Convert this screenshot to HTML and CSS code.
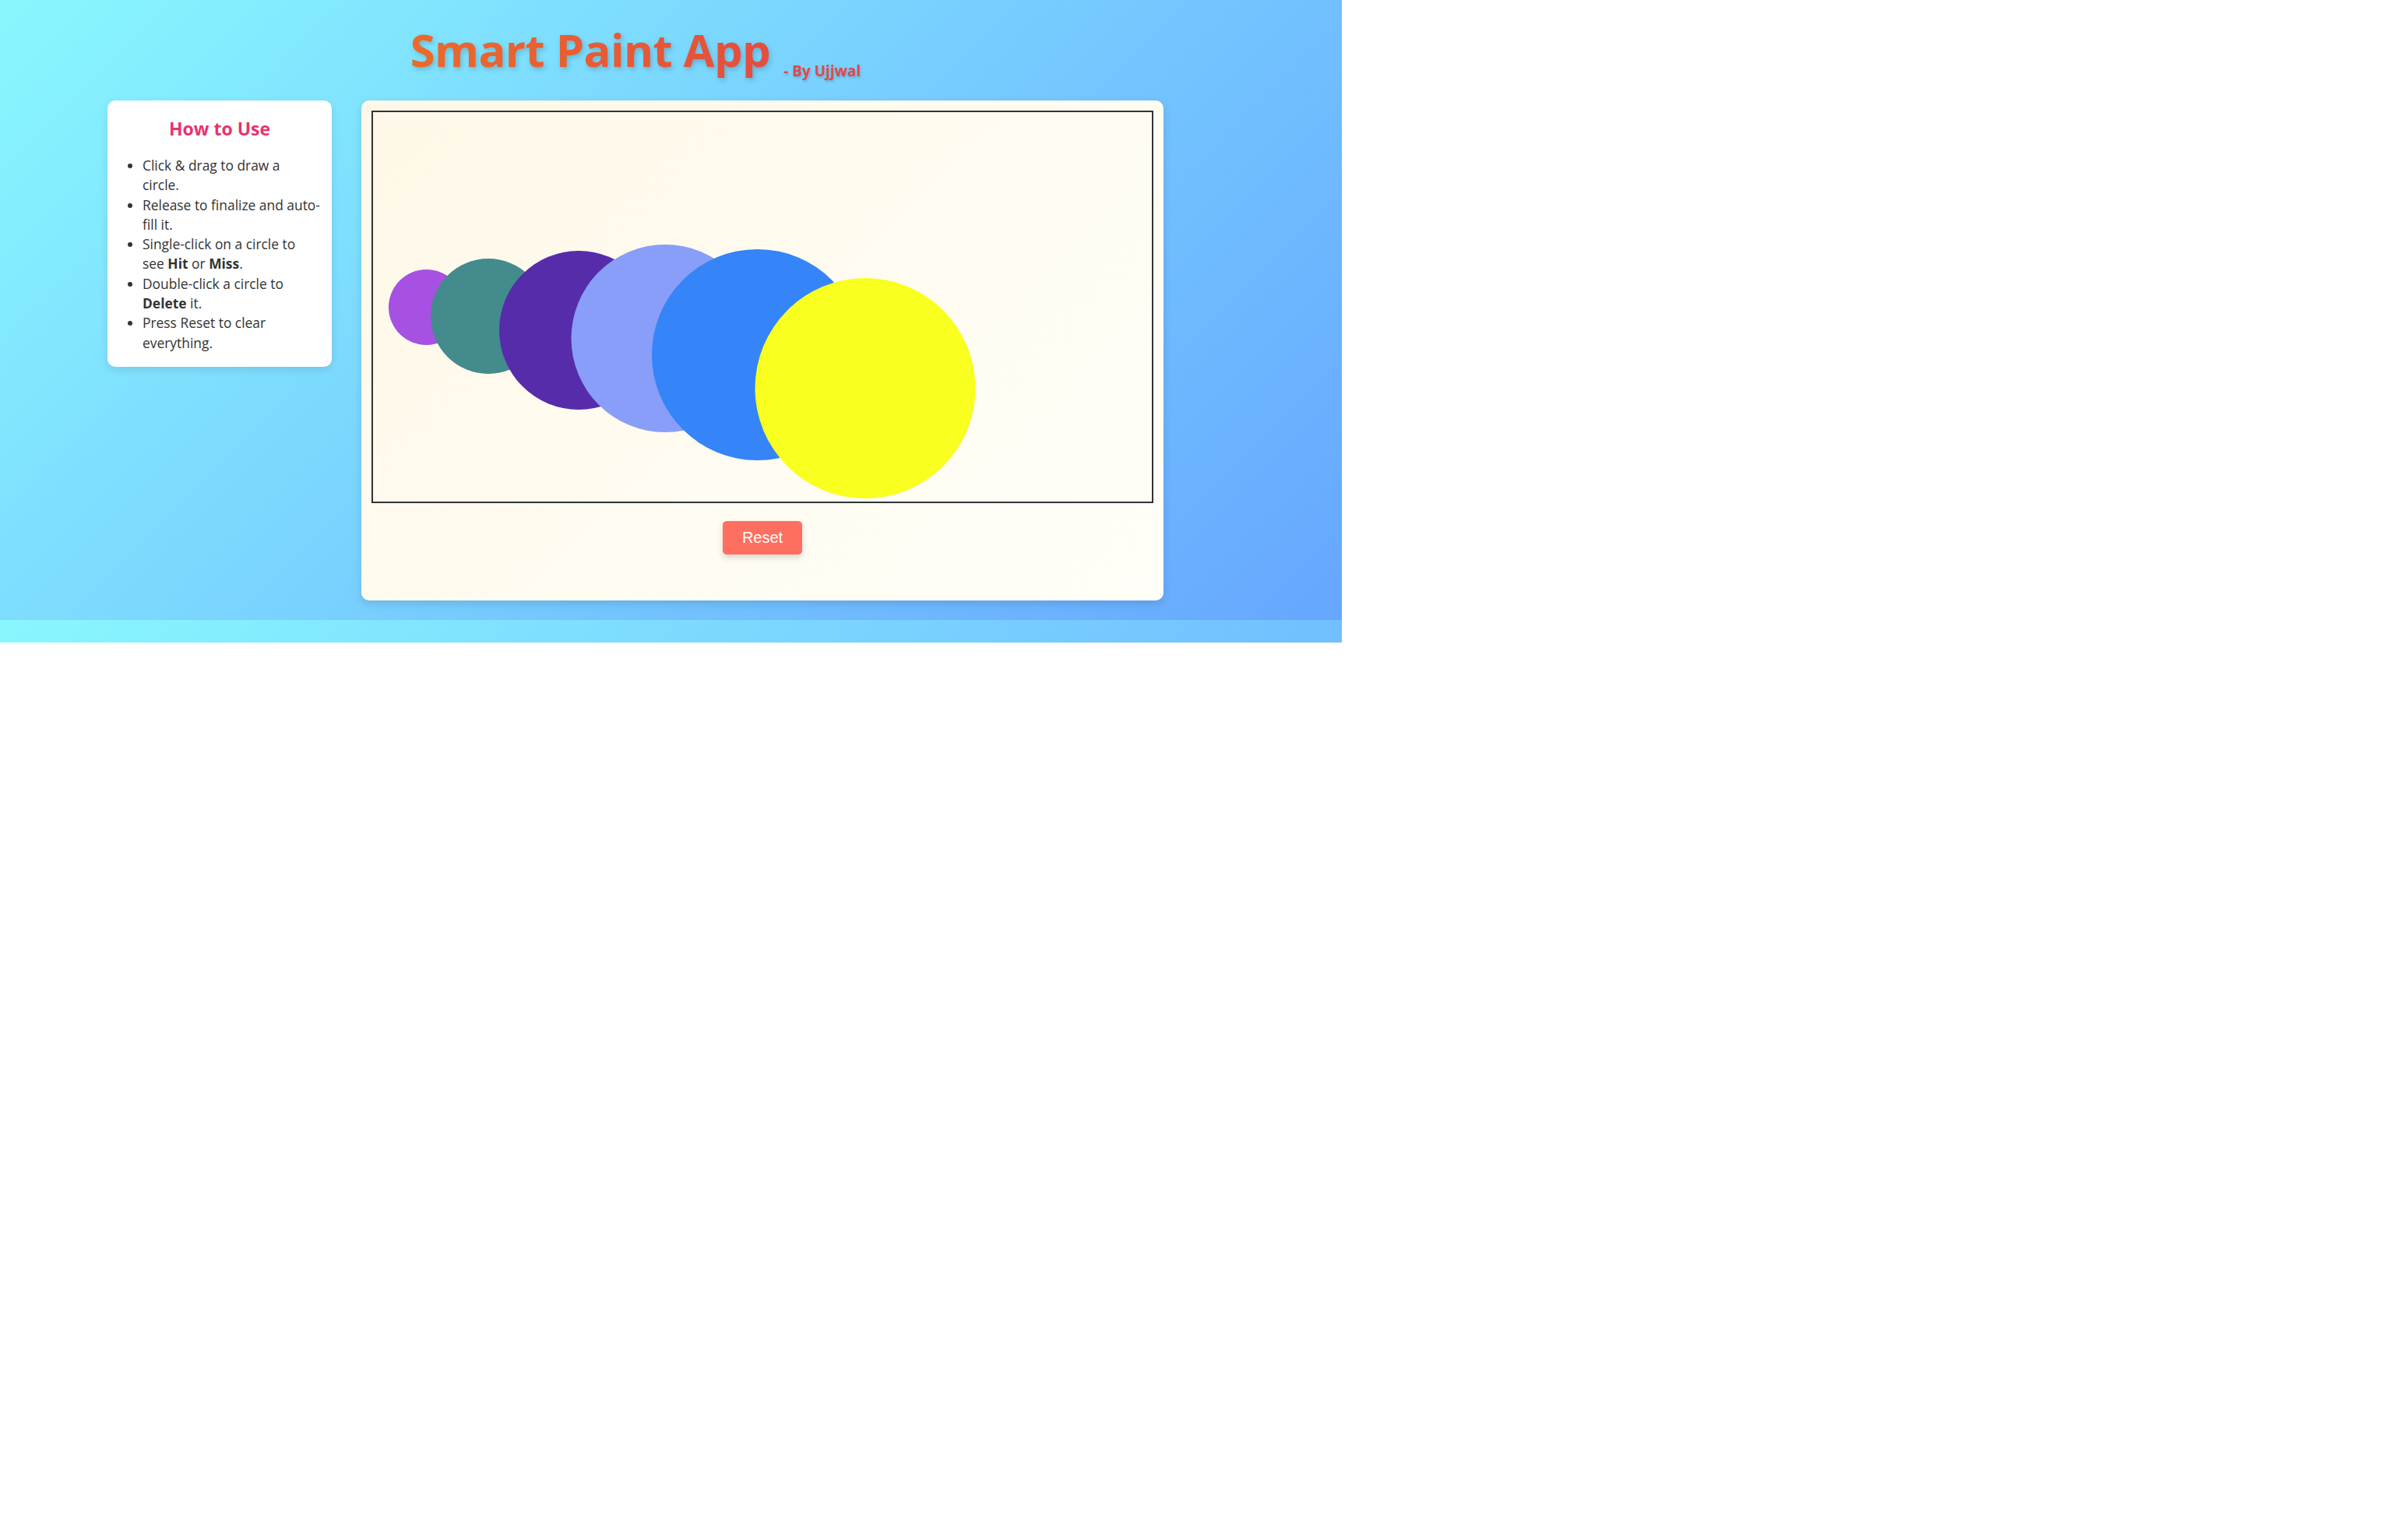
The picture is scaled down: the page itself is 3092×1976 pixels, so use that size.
FILE: index.html
```html
<!DOCTYPE html>
<html lang="en">
<head>
<meta charset="utf-8">
<title>Smart Paint App</title>
<link rel="stylesheet" href="styles.css">
</head>
<body>
<div class="screen">
  <div class="wrap">
    <header class="header">
      <h1 class="title">Smart Paint App</h1>
      <span class="byline">- By Ujjwal</span>
    </header>
    <main class="main">
      <aside class="howto">
        <h3 class="howto-title">How to Use</h3>
        <ul class="howto-list">
          <li>Click &amp; drag to draw a<br>circle.</li>
          <li>Release to finalize and auto-fill it.</li>
          <li>Single-click on a circle to<br>see <b>Hit</b> or <b>Miss</b>.</li>
          <li>Double-click a circle to<br><b>Delete</b> it.</li>
          <li>Press Reset to clear<br>everything.</li>
        </ul>
      </aside>
      <section class="board">
        <svg class="canvas" width="1000" height="500" viewBox="0 0 1000 500">
          <circle cx="68.5" cy="250.5" r="48.5" fill="#a651e2"/>
          <circle cx="148" cy="262" r="74" fill="#438b8d"/>
          <circle cx="264" cy="280" r="102" fill="#562cab"/>
          <circle cx="375" cy="290.5" r="120.5" fill="#889ef8"/>
          <circle cx="493.5" cy="311.5" r="135.5" fill="#3584f8"/>
          <circle cx="632" cy="354.5" r="141.5" fill="#f9ff1e"/>
        </svg>
        <button class="reset" type="button">Reset</button>
      </section>
    </main>
  </div>
</div>
</body>
</html>
```
FILE: styles.css
```css
html, body {
  margin: 0;
  padding: 0;
  background: #ffffff;
}

.screen {
  width: 1723px;
  height: 825px;
  background-image: linear-gradient(135deg, #89f7fe 0%, #66a6ff 100%);
  background-size: 1723px 796px;
  background-repeat: repeat;
  overflow: hidden;
}

.wrap {
  margin-left: 138px;
  width: 1356px;
  padding-top: 28px;
}

.header {
  display: flex;
  justify-content: center;
  align-items: flex-end;
}

.title {
  margin: 0;
  font-family: "Open Sans", "Noto Sans", sans-serif;
  font-weight: 700;
  font-size: 58px;
  line-height: 72px;
  letter-spacing: -0.6px;
  background-image: linear-gradient(90deg, #ec6a2a 0%, #e34e3e 100%);
  -webkit-background-clip: text;
  background-clip: text;
  color: transparent;
  filter: drop-shadow(2px 3px 3px rgba(0, 0, 0, 0.18));
}

.byline {
  margin-left: 17px;
  font-family: "Open Sans", "Noto Sans", sans-serif;
  font-weight: 700;
  font-size: 19px;
  line-height: 18px;
  color: #e2484a;
  text-shadow: 1px 2px 3px rgba(0, 0, 0, 0.18);
}

.main {
  display: flex;
  align-items: flex-start;
  gap: 38px;
  margin-top: 29px;
}

.howto {
  width: 288px;
  box-sizing: border-box;
  padding: 20px 10px 18px 20px;
  background: #ffffff;
  border-radius: 10px;
  box-shadow: 0 4px 12px rgba(0, 0, 0, 0.1);
  font-family: "Open Sans", "Noto Sans", sans-serif;
  color: #333333;
}

.howto-title {
  margin: 0;
  padding-right: 10px;
  text-align: center;
  font-size: 23px;
  line-height: 32px;
  font-weight: 700;
  color: #e8326e;
}

.howto-list {
  margin: 19px 0 0 0;
  padding-left: 25px;
  font-size: 17.4px;
  line-height: 25.3px;
}

.howto-list b {
  font-weight: 700;
}

.board {
  display: flex;
  flex-direction: column;
  align-items: center;
  padding: 13px 13px 59px 13px;
  background-image: linear-gradient(135deg, #fff8e8 0%, #fffef8 100%);
  border-radius: 10px;
  box-shadow: 0 4px 12px rgba(0, 0, 0, 0.12);
}

.canvas {
  display: block;
  border: 2px solid #333333;
}

.reset {
  margin-top: 23px;
  padding: 10px 25px;
  border: none;
  border-radius: 5px;
  background: #ff6f61;
  color: #ffffff;
  font-family: "Liberation Sans", Arial, sans-serif;
  font-size: 20px;
  line-height: 23px;
  box-shadow: 0 4px 8px rgba(0, 0, 0, 0.15);
  cursor: pointer;
}
```
